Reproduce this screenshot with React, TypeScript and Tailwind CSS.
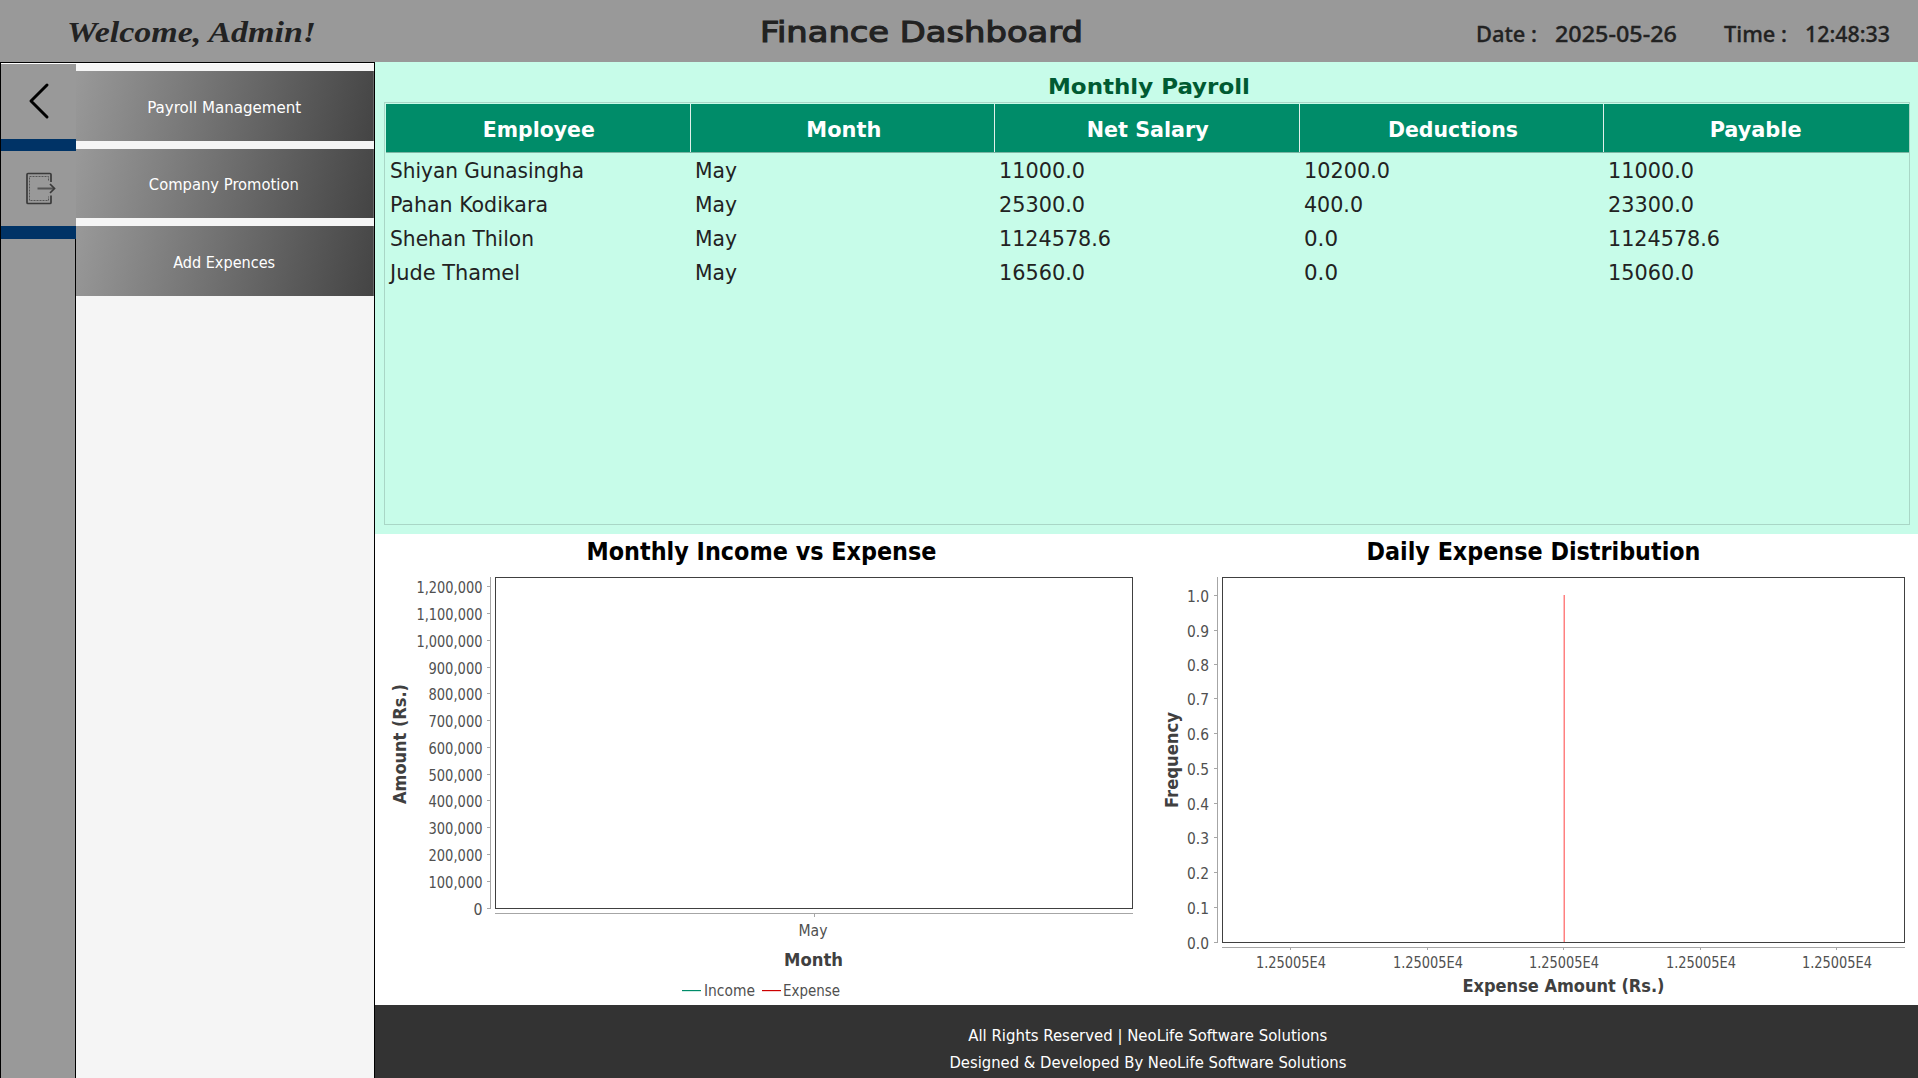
import { useLayoutEffect, useRef } from "react";

const SANS = "font-['DejaVu_Sans_Condensed','DejaVu_Sans',sans-serif]";

/** Text stretched to an exact measure, anchored at its left edge or its centre. */
function Fit({ text, width, className = "", center = false }: { text: string; width: number; className?: string; center?: boolean }) {
  const ref = useRef<HTMLSpanElement>(null);
  useLayoutEffect(() => {
    const el = ref.current;
    if (!el) return;
    el.style.transform = "none";
    el.style.transform = `scaleX(${width / el.getBoundingClientRect().width})`;
  }, [text, width]);
  return (
    <span ref={ref} className={`inline-block whitespace-pre ${center ? "origin-center" : "origin-left"} ${className}`}>
      {text}
    </span>
  );
}

const columns = [
  { name: "Employee", w: 112 },
  { name: "Month", w: 75 },
  { name: "Net Salary", w: 122 },
  { name: "Deductions", w: 130 },
  { name: "Payable", w: 92 },
];

type Cell = [string, number];
const rows: Cell[][] = [
  [["Shiyan Gunasingha", 194], ["May", 42], ["11000.0", 86], ["10200.0", 86], ["11000.0", 86]],
  [["Pahan Kodikara", 158], ["May", 42], ["25300.0", 86], ["400.0", 59], ["23300.0", 86]],
  [["Shehan Thilon", 144], ["May", 42], ["1124578.6", 112], ["0.0", 34], ["1124578.6", 112]],
  [["Jude Thamel", 130], ["May", 42], ["16560.0", 86], ["0.0", 34], ["15060.0", 86]],
];

const menu = [
  { text: "Payroll Management", w: 154 },
  { text: "Company Promotion", w: 150 },
  { text: "Add Expences", w: 102 },
];

const amountTicks: [string, number, number][] = [
  ["1,200,000", 586.5, 66], ["1,100,000", 613.5, 66], ["1,000,000", 640.5, 66],
  ["900,000", 667.5, 54], ["800,000", 693.5, 54], ["700,000", 720.5, 54], ["600,000", 747.5, 54],
  ["500,000", 774.5, 54], ["400,000", 800.5, 54], ["300,000", 827.5, 54], ["200,000", 854.5, 54],
  ["100,000", 881.5, 54], ["0", 908.5, 9],
];

const freqTicks: [string, number][] = [
  ["1.0", 595.5], ["0.9", 630.5], ["0.8", 664.5], ["0.7", 698.5], ["0.6", 733.5], ["0.5", 768.5],
  ["0.4", 803.5], ["0.3", 837.5], ["0.2", 872.5], ["0.1", 907.5], ["0.0", 942.5],
];

const expenseTicks = [1290.5, 1427.5, 1563.5, 1700.5, 1836.5];

function ChartText({ x, y, w, size = 15, bold = false, fill = bold ? "#404040" : "#505050", children, rotate = false }: {
  x: number; y: number; w: number; size?: number; bold?: boolean; fill?: string; children: string; rotate?: boolean;
}) {
  return (
    <text
      x={x}
      y={y}
      textLength={w}
      lengthAdjust="spacingAndGlyphs"
      fontSize={size}
      fontWeight={bold ? 700 : 400}
      fill={fill}
      transform={rotate ? `rotate(-90 ${x} ${y})` : undefined}
    >
      {children}
    </text>
  );
}

function IncomeChart() {
  return (
    <svg className={`block ${SANS}`} width="771" height="471" viewBox="375 534 771 471">
      <ChartText x={586.5} y={559.5} w={350} size={25} bold fill="#000">Monthly Income vs Expense</ChartText>
      <rect x="495.5" y="577.5" width="637" height="331" fill="none" stroke="#404040" />
      <path d="M490.5 577V909M495 913.5H1133M814.5 913V917" stroke="#a6a6a6" fill="none" />
      {amountTicks.map(([label, y, w]) => (
        <g key={label}>
          <path d={`M487 ${y}H490`} stroke="#a6a6a6" />
          <ChartText x={482.5 - w} y={y + 6.5} w={w}>{label}</ChartText>
        </g>
      ))}
      <ChartText x={406} y={804} w={120} size={17} bold rotate>Amount (Rs.)</ChartText>
      <ChartText x={798.5} y={936} w={29}>May</ChartText>
      <ChartText x={784} y={966} w={59} size={17.5} bold>Month</ChartText>
      <path d="M682 990.5H701" stroke="#008c69" />
      <path d="M682 991.5H701" stroke="#d0ece5" />
      <ChartText x={704} y={996} w={51}>Income</ChartText>
      <path d="M762 990.5H781" stroke="#cc0000" />
      <path d="M762 991.5H781" stroke="#f7d0d0" />
      <ChartText x={783} y={996} w={57}>Expense</ChartText>
    </svg>
  );
}

function ExpenseChart() {
  return (
    <svg className={`block ${SANS}`} width="772" height="471" viewBox="1146 534 772 471">
      <ChartText x={1366.5} y={559.5} w={334} size={25} bold fill="#000">Daily Expense Distribution</ChartText>
      <path d="M1563.5 595V942" stroke="#ffc0c0" />
      <path d="M1564.5 595V942" stroke="#ff8080" />
      <rect x="1222.5" y="577.5" width="682" height="365" fill="none" stroke="#404040" />
      <path d="M1217.5 577V943M1222 947.5H1905" stroke="#a6a6a6" fill="none" />
      {freqTicks.map(([label, y]) => (
        <g key={label}>
          <path d={`M1214 ${y}H1217`} stroke="#a6a6a6" />
          <ChartText x={1187} y={y + 6.5} w={22}>{label}</ChartText>
        </g>
      ))}
      {expenseTicks.map((x) => (
        <g key={x}>
          <path d={`M${x} 948V950`} stroke="#a6a6a6" />
          <ChartText x={x - 34.5} y={968} w={70}>1.25005E4</ChartText>
        </g>
      ))}
      <ChartText x={1178} y={808} w={96} size={17} bold rotate>Frequency</ChartText>
      <ChartText x={1462.5} y={992} w={202} size={17.5} bold>Expense Amount (Rs.)</ChartText>
    </svg>
  );
}

export default function App() {
  return (
    <div className={`flex h-[1078px] w-[1918px] flex-col overflow-hidden bg-white ${SANS}`}>
      <header className="flex h-[62px] shrink-0 items-center bg-[#999999] text-[#222222]">
        <div className="w-[760px] pl-[67px]">
          <Fit text="Welcome, Admin!" width={249} className="pt-px font-['Liberation_Serif',serif] text-[30px] leading-[62px] font-bold italic" />
        </div>
        <div className="w-[716px]">
          <Fit text="Finance Dashboard" width={323} className="pt-1 font-['DejaVu_Sans',sans-serif] text-[28px] leading-[62px] [-webkit-text-stroke:1.1px_#222222]" />
        </div>
        <div className="flex pt-[5px] font-['Noto_Sans','Open_Sans',sans-serif] text-[21.5px] leading-[58px] font-medium [-webkit-text-stroke:0.3px_#222222]">
          <div className="w-[79px]"><Fit text="Date :" width={61} /></div>
          <div className="w-[169px]"><Fit text="2025-05-26" width={122} /></div>
          <div className="w-[81px]"><Fit text="Time :" width={63} /></div>
          <div><Fit text="12:48:33" width={85} /></div>
        </div>
      </header>

      <div className="flex min-h-0 flex-1">
        <aside className="flex w-[375px] shrink-0 border-x border-t border-black bg-[#f5f5f5]">
          <div className="flex w-[75px] shrink-0 flex-col border-t border-white bg-[#999999]">
            <button className="flex h-[75px] items-center justify-center">
              <svg width="75" height="75" viewBox="0 0 75 75" fill="none">
                <path d="M46 21 30 37 46 53" stroke="#000" strokeWidth="3" strokeLinecap="round" strokeLinejoin="round" />
              </svg>
            </button>
            <div className="h-3 bg-[#003366]" />
            <button className="flex h-[75px] items-center justify-center">
              <svg width="75" height="75" viewBox="1 151 75 75" fill="none" stroke="#3a3a3a">
                <path d="M51 182V174.5Q51 173.5 50 173.5H28Q27 173.5 27 174.5V202.5Q27 203.5 28 203.5H50Q51 203.5 51 202.5V195.5" strokeWidth="1.7" />
                <path d="M48.5 180.5V176.5H29.5V200.5H48.5V196.5" strokeWidth="1" stroke="#555" strokeDasharray="2 1" />
                <path d="M37.5 188.5H54" strokeWidth="2" stroke="#555" />
                <path d="M50 184 54.5 188.5 50 193" strokeWidth="1.7" />
              </svg>
            </button>
            <div className="h-[13px] bg-[#003366]" />
            <div className="flex-1 border-r border-black" />
          </div>
          <nav className="flex flex-1 flex-col gap-2 border-t border-white pt-[7px] text-white">
            {menu.map((m) => (
              <button key={m.text} className="flex h-[69.67px] items-center justify-center border-r border-[#686868] bg-[linear-gradient(103deg,#999999,#444444)] pt-[5px] pr-px text-[15.5px]">
                <Fit text={m.text} width={m.w} center />
              </button>
            ))}
          </nav>
        </aside>

        <main className="flex min-w-0 flex-1 flex-col">
          <section className="flex h-[472px] shrink-0 flex-col bg-[#c7fce9] pr-2 pb-[9px] pl-[9px]">
            <h1 className="flex h-[40px] items-center justify-center pt-[9px] pl-1 text-[22px] leading-8 font-bold text-[#005a32]">
              <Fit text="Monthly Payroll" width={202} center />
            </h1>
            <div className="flex-1 border border-[#a9d6c6] pt-px pl-px text-[#222222]">
              <div className="grid h-[49px] grid-cols-5 border-b border-[#7db5a4] bg-[#008c69] text-white">
                {columns.map((c, i) => (
                  <div key={c.name} className={`flex items-center justify-center pt-[5px] text-[21px] font-bold ${i < 4 ? "border-r border-[#e0f0ea] pl-0.5" : "pr-0.5"}`}>
                    <Fit text={c.name} width={c.w} center />
                  </div>
                ))}
              </div>
              {rows.map((r) => (
                <div key={r[0][0]} className="grid h-[34px] grid-cols-5 text-[21px] leading-[36px]">
                  {r.map(([t, w], i) => (
                    <div key={i} className="pl-1">
                      <Fit text={t} width={w} />
                    </div>
                  ))}
                </div>
              ))}
            </div>
          </section>
          <section className="flex h-[471px] shrink-0 bg-white">
            <IncomeChart />
            <ExpenseChart />
          </section>
          <footer className="flex flex-1 flex-col items-center bg-[#333333] pt-[18px] pl-[3px] text-[15.5px] leading-[27px] text-white">
            <Fit text="All Rights Reserved | NeoLife Software Solutions" width={359} center />
            <Fit text="Designed &amp; Developed By NeoLife Software Solutions" width={397} center />
          </footer>
        </main>
      </div>
    </div>
  );
}
